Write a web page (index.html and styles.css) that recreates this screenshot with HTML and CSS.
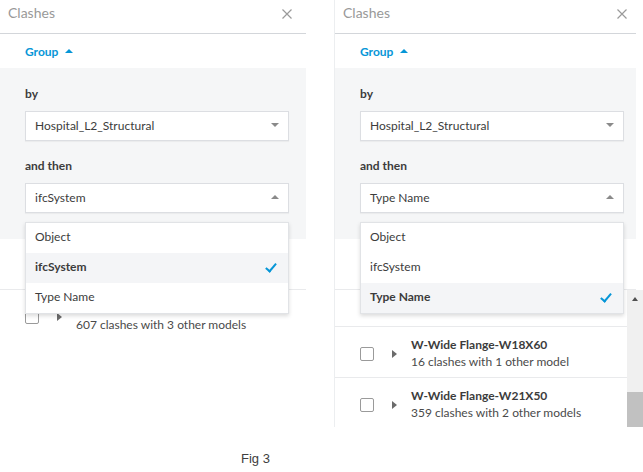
FILE: index.html
```html
<!DOCTYPE html>
<html lang="en">
<head>
    <meta charset="UTF-8">
    <title>Clashes - Group</title>
    <link rel="stylesheet" href="styles.css">
</head>
<body>
    <div class="screens">
        <!-- Painel 1: agrupado por ifcSystem -->
        <div class="panel panel-left">
            <div class="panel-head">
                <span class="panel-title">Clashes</span>
                <svg class="close" width="10" height="10" viewBox="0 0 10 10"><path d="M0.5 0.5l9 9M9.5 0.5l-9 9" stroke="#9a9a9a" stroke-width="1.2"/></svg>
            </div>
            <div class="group-toggle">Group <span class="tri-up blue"></span></div>
            <div class="group-options">
                <div class="field-label">by</div>
                <div class="select">Hospital_L2_Structural <span class="tri-down"></span></div>
                <div class="field-label then">and then</div>
                <div class="select-wrap">
                    <div class="select">ifcSystem <span class="tri-up"></span></div>
                    <ul class="menu">
                        <li>Object</li>
                        <li class="selected">ifcSystem <span class="check"></span></li>
                        <li>Type Name</li>
                    </ul>
                </div>
            </div>
            <div class="toolbar"></div>
            <div class="list">
                <div class="rows">
                    <div class="row row-last">
                        <span class="checkbox"></span>
                        <span class="tri-right"></span>
                        <div class="row-text covered">
                            <div class="row-sub">607 clashes with 3 other models</div>
                        </div>
                    </div>
                </div>
            </div>
        </div>

        <!-- Painel 2: agrupado por Type Name -->
        <div class="panel panel-right">
            <div class="panel-head">
                <span class="panel-title">Clashes</span>
                <svg class="close" width="10" height="10" viewBox="0 0 10 10"><path d="M0.5 0.5l9 9M9.5 0.5l-9 9" stroke="#9a9a9a" stroke-width="1.2"/></svg>
            </div>
            <div class="group-toggle">Group <span class="tri-up blue"></span></div>
            <div class="group-options">
                <div class="field-label">by</div>
                <div class="select">Hospital_L2_Structural <span class="tri-down"></span></div>
                <div class="field-label then">and then</div>
                <div class="select-wrap">
                    <div class="select">Type Name <span class="tri-up"></span></div>
                    <ul class="menu">
                        <li>Object</li>
                        <li>ifcSystem</li>
                        <li class="selected">Type Name <span class="check"></span></li>
                    </ul>
                </div>
            </div>
            <div class="toolbar"></div>
            <div class="list list-scroll">
                <div class="rows">
                    <div class="row row-partial"></div>
                    <div class="row">
                        <span class="checkbox"></span>
                        <span class="tri-right"></span>
                        <div class="row-text">
                            <div class="row-title">W-Wide Flange-W18X60</div>
                            <div class="row-sub">16 clashes with 1 other model</div>
                        </div>
                    </div>
                    <div class="row">
                        <span class="checkbox"></span>
                        <span class="tri-right"></span>
                        <div class="row-text">
                            <div class="row-title">W-Wide Flange-W21X50</div>
                            <div class="row-sub">359 clashes with 2 other models</div>
                        </div>
                    </div>
                </div>
                <div class="scrollbar">
                    <span class="scroll-arrow"></span>
                    <span class="scroll-thumb"></span>
                </div>
            </div>
        </div>
    </div>

    <p class="caption">Fig 3</p>
</body>
</html>
```

FILE: styles.css
```css
body {
    margin: 0;
    background-color: #fff;
    font-family: Lato, "Noto Sans", sans-serif;
    font-size: 12px;
    color: #3c3c3c;
}

.screens {
    display: flex;
    gap: 28px;
    height: 427px;
    margin-left: -1px;
}

.panel {
    --pad-r: 17px;
    position: relative;
    display: flex;
    flex-direction: column;
    border-left: 1px solid #eceef0;
}

.panel-left {
    width: 306px;
}

.panel-right {
    --pad-r: 12px;
    width: 301px;
}

/* cabeçalho */
.panel-head {
    height: 33px;
    border-bottom: 1px solid #d3d6da;
    display: flex;
    justify-content: space-between;
    align-items: flex-start;
    padding: 0 calc(var(--pad-r) - 3px) 0 8px;
}

.panel-title {
    font-size: 14px;
    line-height: 20px;
    margin-top: 3px;
    color: #999;
}

.close {
    margin-top: 9px;
}

.group-toggle {
    height: 34px;
    display: flex;
    align-items: center;
    gap: 7px;
    padding-left: 25px;
    color: #0696d7;
    font-weight: 700;
}

.group-options {
    background-color: #f5f6f7;
    padding: 18px var(--pad-r) 26px 25px;
}

.field-label {
    font-weight: 700;
    line-height: 16px;
    margin-bottom: 9px;
}

.field-label.then {
    margin-top: 17px;
}

.select {
    height: 26px;
    display: flex;
    align-items: center;
    justify-content: space-between;
    padding: 0 9px 2px;
    background-color: #fff;
    border: 1px solid #dcdee2;
    box-shadow: 0 1px 1px rgba(0, 0, 0, 0.04);
}

.select-wrap {
    position: relative;
}

.menu {
    position: absolute;
    top: 39px;
    left: 0;
    right: 0;
    z-index: 2;
    margin: 0;
    padding: 0;
    list-style: none;
    background-color: #fff;
    border: 1px solid #e1e3e6;
    box-shadow: 0 2px 4px rgba(0, 0, 0, 0.14);
}

.menu li {
    height: 27px;
    display: flex;
    align-items: center;
    justify-content: space-between;
    padding: 0 9px 3px;
}

.menu li.selected {
    background-color: #f4f5f7;
    font-weight: 700;
}

.check {
    width: 4px;
    height: 9px;
    margin: 0 5px 1px 0;
    border: solid #0696d7;
    border-width: 0 2px 2px 0;
    transform: rotate(40deg);
}

/* triângulos */
.tri-up,
.tri-down {
    width: 0;
    height: 0;
    border-left: 4px solid transparent;
    border-right: 4px solid transparent;
}

.tri-up {
    border-bottom: 4px solid #8a8a8a;
}

.tri-up.blue {
    border-bottom-color: #0696d7;
}

.tri-down {
    border-top: 4px solid #8a8a8a;
}

.tri-right {
    width: 0;
    height: 0;
    margin: 23px 14px 0 18px;
    border-top: 4px solid transparent;
    border-bottom: 4px solid transparent;
    border-left: 5px solid #6b6b6b;
}

.toolbar {
    height: 50px;
    border-bottom: 1px solid #e9eaec;
}

/* lista de conflitos */
.list {
    flex: 1;
    display: flex;
    overflow: hidden;
}

.list-scroll {
    margin-right: -7px;
}

.rows {
    flex: 1;
}

.row {
    height: 50px;
    display: flex;
    align-items: flex-start;
    padding-left: 25px;
    border-bottom: 1px solid #e9eaec;
}

.row-last {
    border-bottom: none;
}

.row-partial {
    height: 36px;
}

.checkbox {
    width: 12px;
    height: 12px;
    margin-top: 20px;
    border: 1px solid #9a9a9a;
    border-radius: 2px;
    background-color: #fff;
}

.row-text {
    padding-top: 9px;
    line-height: 17px;
}

.row-text.covered {
    padding-top: 26px;
}

.row-title {
    font-weight: 700;
}

.row-sub {
    color: #4a4a4a;
}

.scrollbar {
    width: 16px;
    display: flex;
    flex-direction: column;
    align-items: center;
    background-color: #f0f0f0;
}

.scroll-arrow {
    width: 0;
    height: 0;
    margin-top: 7px;
    border-left: 3px solid transparent;
    border-right: 3px solid transparent;
    border-bottom: 4px solid #505050;
}

.scroll-thumb {
    width: 16px;
    height: 35px;
    margin-top: auto;
    background-color: #c1c1c1;
}

.caption {
    margin: 24px 0 0 241px;
    font-family: "Liberation Sans", Arial, sans-serif;
    font-size: 13px;
    line-height: 16px;
    color: #404040;
}
```
